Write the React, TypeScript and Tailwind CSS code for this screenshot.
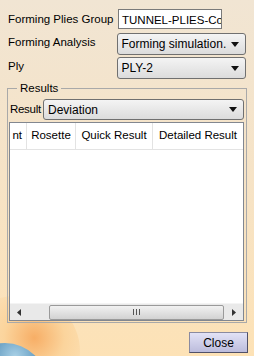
import React from "react";

const font = { fontFamily: '"Liberation Sans", Arial, sans-serif' };

function Caret() {
  return (
    <svg width="8" height="5" viewBox="0 0 8 5" className="shrink-0">
      <path d="M0 0h8L4 5z" fill="#111" />
    </svg>
  );
}

function Combo({ value, className }: { value: string; className: string }) {
  return (
    <div
      className={`flex items-center justify-between rounded-[3px] border border-[#707070] bg-gradient-to-b from-[#f4f4f4] to-[#dcdcdc] pl-[4px] pr-[6px] text-[12px] text-black ${className}`}
    >
      <span className="truncate whitespace-nowrap">{value}</span>
      <Caret />
    </div>
  );
}

function HScroll() {
  return (
    <div className="flex h-[17px] items-center bg-[#e9e9e9] border-t border-[#f4f4f4]">
      <div className="flex w-[17px] items-center justify-center">
        <svg width="4" height="7" viewBox="0 0 4 7">
          <path d="M4 0v7L0 3.5z" fill="#333" />
        </svg>
      </div>
      <div className="w-[22px]" />
      <div className="flex h-[15px] flex-1 items-center justify-center rounded-[2px] border border-[#9a9a9a] bg-gradient-to-b from-[#f2f2f2] to-[#d2d2d2]">
        <div className="flex gap-[2px]">
          <div className="h-[6px] w-px bg-[#555]" />
          <div className="h-[6px] w-px bg-[#555]" />
          <div className="h-[6px] w-px bg-[#555]" />
        </div>
      </div>
      <div className="flex w-[19px] items-center justify-center">
        <svg width="4" height="7" viewBox="0 0 4 7">
          <path d="M0 0v7l4-3.5z" fill="#333" />
        </svg>
      </div>
    </div>
  );
}

export default function App() {
  return (
    <div
      className="relative h-[356px] w-[254px] overflow-hidden bg-gradient-to-b from-[#f1e5d3] via-[#f6e3c6] to-[#fde2b6] text-[11.5px] text-black"
      style={font}
    >
      {/* globe decoration */}
      <div className="absolute left-[-40px] top-[296px] h-[110px] w-[120px] rounded-full bg-[radial-gradient(circle_at_62%_38%,#f7ae66_0%,#fbd49c_30%,transparent_62%)]" />
      <div className="absolute left-[-37px] top-[343px] h-[84px] w-[84px] rounded-full bg-[radial-gradient(circle_at_62%_16%,#a8d0e6_0%,#5a94bb_30%,#3b4d5e_70%)]" />

      <div className="relative flex flex-col px-[8px] pt-[9px]">
        <div className="flex items-start">
          <span className="w-[110px] pt-[2px] whitespace-nowrap">Forming Plies Group</span>
          <div className="h-[20px] w-[104px] overflow-hidden border border-[#7a7a7a] bg-white pl-[3px] pt-[2px] text-[11.5px] whitespace-nowrap">
            TUNNEL-PLIES-Co
          </div>
        </div>
        <div className="mt-[4px] flex items-start">
          <span className="w-[109px] pt-[1px]">Forming Analysis</span>
          <Combo value="Forming simulation." className="h-[22px] w-[130px]" />
        </div>
        <div className="mt-[2px] flex items-start">
          <span className="w-[109px] pt-[1px]">Ply</span>
          <Combo value="PLY-2" className="h-[22px] w-[130px]" />
        </div>
      </div>

      <fieldset className="relative mx-[7px] mt-[2px] h-[242px] border border-[#a9a9a9] pb-[1px] pl-[1px] pr-[2px]">
        <legend className="ml-[8px] px-[3px] leading-[14px]">Results</legend>
        <div className="mt-[4px] flex items-start">
          <span className="w-[34px] pl-[1px] pt-[2px] tracking-[-0.3px] whitespace-nowrap">Result</span>
          <Combo value="Deviation" className="h-[21px] flex-1" />
        </div>
        <div className="mt-[2px] flex h-[199px] flex-col border border-[#828790] bg-white">
          <div className="flex h-[27px] shrink-0 items-center overflow-hidden whitespace-nowrap border-b border-[#e3e3e3]">
            <div className="flex h-full w-[17px] shrink-0 items-center justify-end overflow-hidden border-r border-[#e3e3e3] pr-[4px]">
              <span>nt</span>
            </div>
            <div className="flex h-full w-[49px] shrink-0 items-center justify-center border-r border-[#e3e3e3]">Rosette</div>
            <div className="flex h-full w-[77px] shrink-0 items-center justify-center border-r border-[#e3e3e3]">Quick Result</div>
            <div className="flex h-full flex-1 items-center justify-center">Detailed Result</div>
          </div>
          <div className="flex-1" />
          <HScroll />
        </div>
      </fieldset>

      <div className="relative mt-[9px] flex justify-end pr-[6px]">
        <button className="h-[21px] w-[59px] border border-[#8a8aa0] border-b-[#505068] border-r-[#505068] bg-gradient-to-b from-[#e2e2f6] to-[#bcbcdc] text-[12px] text-black">
          Close
        </button>
      </div>
    </div>
  );
}
